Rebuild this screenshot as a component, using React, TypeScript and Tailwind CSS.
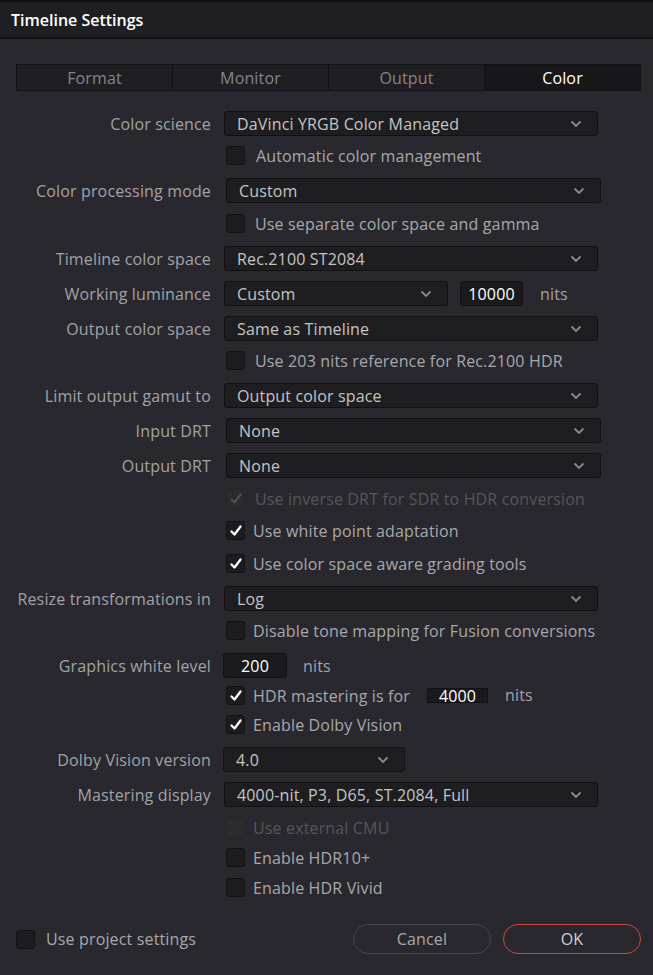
import React from "react";

const Chevron = () => (
  <svg width="12" height="8" viewBox="0 0 12 8" className="shrink-0">
    <path d="M1.5 1.5 L6 6 L10.5 1.5" fill="none" stroke="#8a8a8e" strokeWidth="1.8" />
  </svg>
);

function Dropdown({ value, width, ml = "ml-[12px]" }: { value: string; width: string; ml?: string }) {
  return (
    <div
      className={`${width} ${ml} h-[25px] flex items-center justify-between pl-[12px] pr-[15px] bg-[#1e1e21] border border-[#111113] rounded-[3px] text-[#c4c4c4]`}
    >
      <span>{value}</span>
      <Chevron />
    </div>
  );
}

function Check({ checked = false, disabled = false }: { checked?: boolean; disabled?: boolean }) {
  return (
    <div
      className={`w-[19px] h-[19px] rounded-[3px] border flex items-center justify-center shrink-0 ${
        disabled ? "bg-[#2b2b30] border-[#26262a]" : "bg-[#1c1c1f] border-[#121214]"
      }`}
    >
      {checked && (
        <svg width="14" height="14" viewBox="0 0 14 14">
          <path
            d="M2.5 7.5 L5.5 10.5 L11.5 2.5"
            fill="none"
            stroke={disabled ? "#4e4e52" : "#ffffff"}
            strokeWidth="2.3"
            strokeLinecap="round"
            strokeLinejoin="round"
          />
        </svg>
      )}
    </div>
  );
}

function Label({ text }: { text: string }) {
  return <div className="w-[211px] shrink-0 text-right text-[#a3a3a6] whitespace-nowrap">{text}</div>;
}

function DDRow({ label, value, mt, width = "w-[374px]", ml = "ml-[13px]" }: { label: string; value: string; mt: string; width?: string; ml?: string }) {
  return (
    <div className={`flex items-center ${mt}`}>
      <Label text={label} />
      <Dropdown value={value} width={width} ml={ml} />
    </div>
  );
}

function CBRow({ text, mt, checked, disabled, children, gap = "ml-[10px]" }: { text: string; mt: string; checked?: boolean; disabled?: boolean; children?: React.ReactNode; gap?: string }) {
  return (
    <div className={`flex items-center h-[19px] pl-[226px] ${mt}`}>
      <Check checked={checked} disabled={disabled} />
      <span className={`${gap} whitespace-nowrap ${disabled ? "text-[#56565b]" : "text-[#a8a8ab]"}`}>{text}</span>
      {children}
    </div>
  );
}

export default function App() {
  return (
    <div
      className="w-[653px] h-[975px] bg-[#28282e] flex flex-col text-[16px] leading-none overflow-hidden tracking-[0.15px]"
      style={{ fontFamily: '"Open Sans", "Noto Sans", sans-serif' }}
    >
      <div className="h-[2px] bg-[#0e0e10]" />
      <div className="h-[35px] bg-[#1f1f23] flex items-center pl-[11px] text-white font-semibold text-[16px] tracking-normal">
        Timeline Settings
      </div>
      <div className="h-[2px] bg-[#141416]" />

      <div className="mt-[25px] mx-[16px] h-[27px] flex border border-[#121214] w-[625px]">
        {["Format", "Monitor", "Output", "Color"].map((t, i) => (
          <div
            key={t}
            className={`flex-1 flex items-center justify-center ${i > 0 ? "border-l border-[#121214]" : ""} ${
              t === "Color" ? "bg-[#17171a] text-white" : "bg-[#1f1f23] text-[#85858a]"
            }`}
          >
            {t}
          </div>
        ))}
      </div>

      <DDRow label="Color science" value="DaVinci YRGB Color Managed" mt="mt-[20px]" />
      <CBRow text="Automatic color management" mt="mt-[10px]" gap="ml-[11px]" />
      <DDRow label="Color processing mode" value="Custom" mt="mt-[13px]" width="w-[375px]" ml="ml-[15px]" />
      <CBRow text="Use separate color space and gamma" mt="mt-[11px]" />
      <DDRow label="Timeline color space" value="Rec.2100 ST2084" mt="mt-[13px]" />
      <div className="flex items-center mt-[10px]">
        <Label text="Working luminance" />
        <Dropdown value="Custom" width="w-[224px]" ml="ml-[13px]" />
        <div className="ml-[12px] w-[63px] h-[25px] bg-[#1a1a1d] border border-[#111113] rounded-[3px] flex items-center justify-center text-white">
          10000
        </div>
        <span className="ml-[17px] text-[#a3a3a6]">nits</span>
      </div>
      <DDRow label="Output color space" value="Same as Timeline" mt="mt-[10px]" />
      <CBRow text="Use 203 nits reference for Rec.2100 HDR" mt="mt-[10px]" />
      <DDRow label="Limit output gamut to" value="Output color space" mt="mt-[13px]" />
      <DDRow label="Input DRT" value="None" mt="mt-[10px]" width="w-[375px]" ml="ml-[15px]" />
      <DDRow label="Output DRT" value="None" mt="mt-[10px]" width="w-[375px]" ml="ml-[15px]" />
      <CBRow text="Use inverse DRT for SDR to HDR conversion" mt="mt-[11px]" checked disabled />
      <CBRow text="Use white point adaptation" mt="mt-[13px]" checked gap="ml-[8px]" />
      <CBRow text="Use color space aware grading tools" mt="mt-[14px]" checked gap="ml-[8px]" />
      <DDRow label="Resize transformations in" value="Log" mt="mt-[13px]" />
      <CBRow text="Disable tone mapping for Fusion conversions" mt="mt-[10px]" gap="ml-[8px]" />
      <div className="flex items-center mt-[13px]">
        <Label text="Graphics white level" />
        <div className="ml-[12px] w-[64px] h-[25px] bg-[#1a1a1d] border border-[#111113] rounded-[3px] flex items-center justify-center text-white">
          200
        </div>
        <span className="ml-[16px] text-[#a3a3a6]">nits</span>
      </div>
      <CBRow text="HDR mastering is for" mt="mt-[8px]" checked gap="ml-[8px]">
        <div className="ml-[17px] w-[61px] h-[15px] bg-[#1a1a1d] border border-[#111113] flex items-center justify-center text-white">
          4000
        </div>
        <span className="ml-[17px] text-[#a3a3a6] -mt-[2px]">nits</span>
      </CBRow>
      <CBRow text="Enable Dolby Vision" mt="mt-[10px]" checked gap="ml-[8px]" />
      <div className="flex items-center mt-[13px]">
        <Label text="Dolby Vision version" />
        <Dropdown value="4.0" width="w-[182px]" ml="ml-[12px]" />
      </div>
      <DDRow label="Mastering display" value="4000-nit, P3, D65, ST.2084, Full" mt="mt-[10px]" />
      <CBRow text="Use external CMU" mt="mt-[11px]" disabled gap="ml-[8px]" />
      <CBRow text="Enable HDR10+" mt="mt-[11px]" gap="ml-[8px]" />
      <CBRow text="Enable HDR Vivid" mt="mt-[11px]" gap="ml-[8px]" />

      <div className="flex items-center mt-[27px] px-[16px]">
        <Check />
        <span className="ml-[11px] text-[#a8a8ab]">Use project settings</span>
        <div className="ml-auto flex gap-[12px]">
          <div className="w-[138px] h-[30px] rounded-full border border-[#46464c] flex items-center justify-center text-[#a8a8ab]">
            Cancel
          </div>
          <div className="w-[138px] h-[30px] rounded-full border border-[#d2473d] flex items-center justify-center text-[#d0d0d2] mr-[-4px]">
            OK
          </div>
        </div>
      </div>
    </div>
  );
}
